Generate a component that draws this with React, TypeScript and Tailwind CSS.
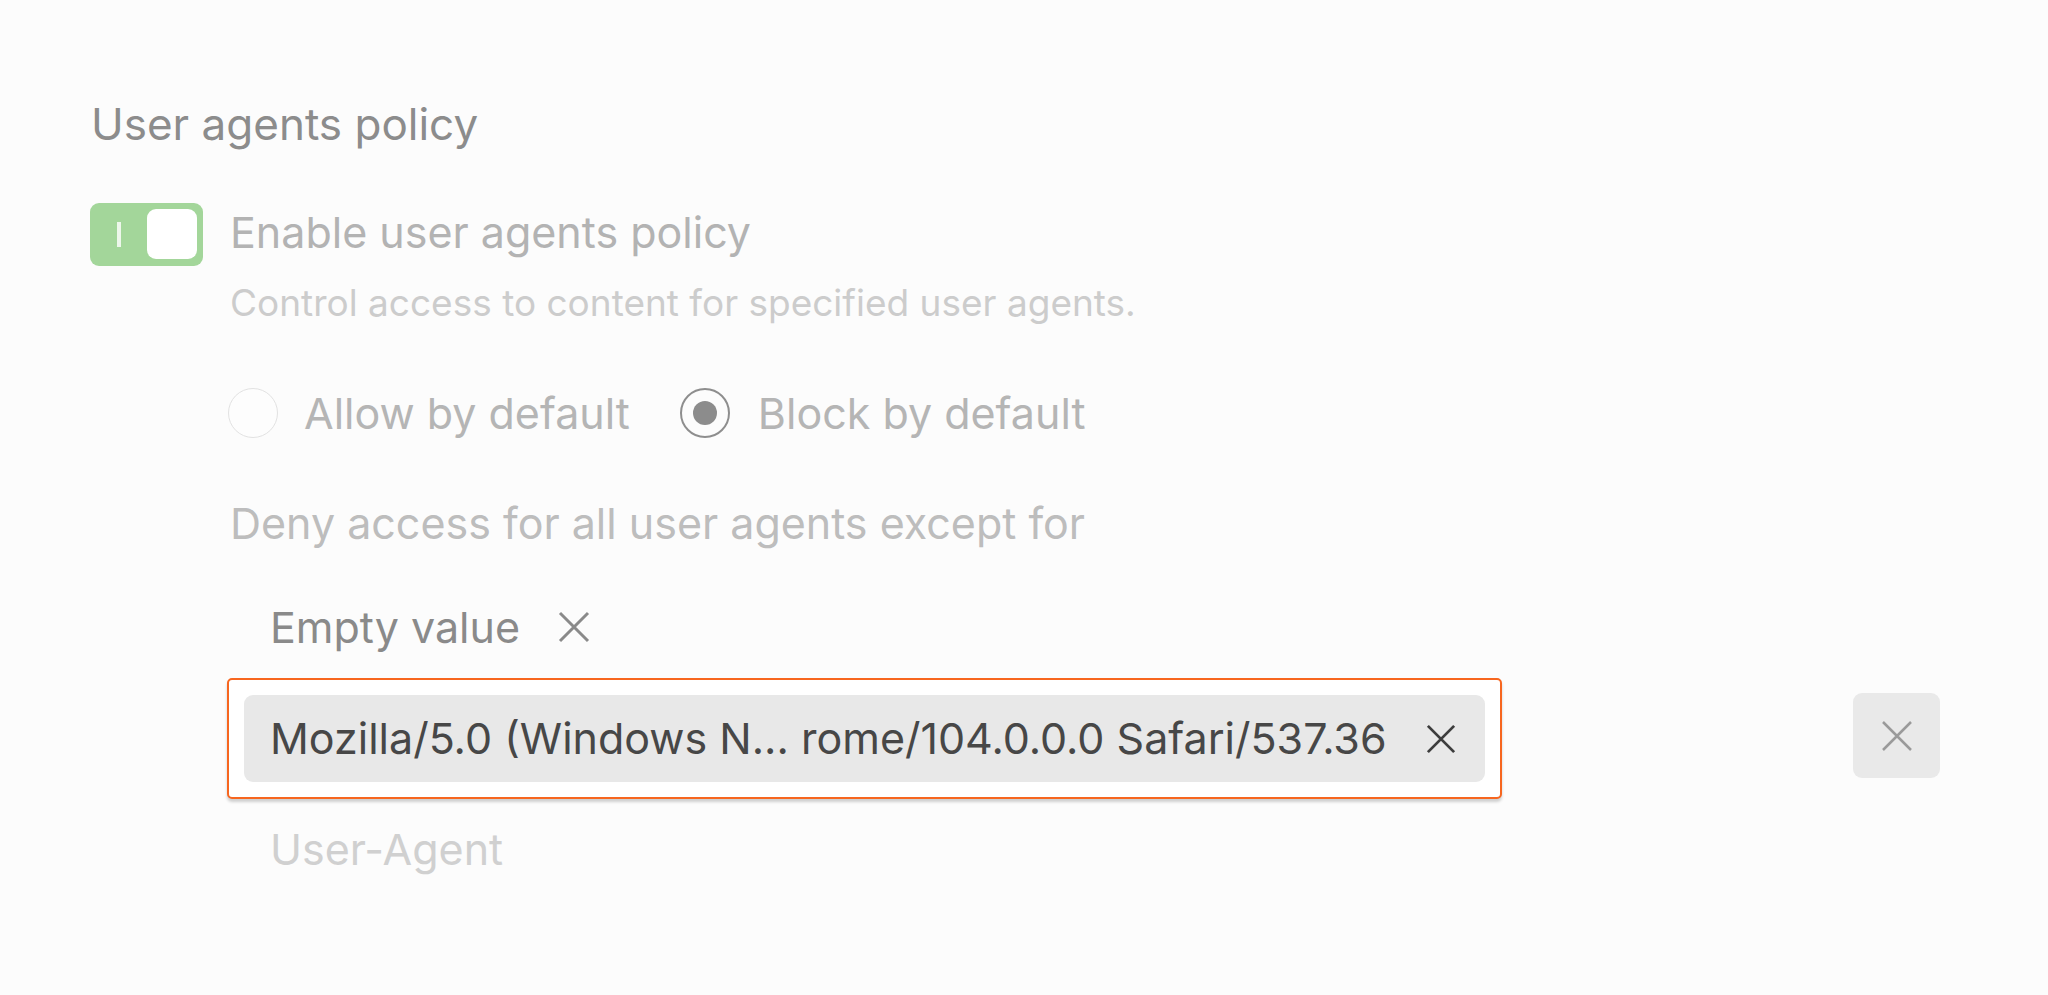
import React from "react";

function XIcon({ size, color, stroke }: { size: number; color: string; stroke: number }) {
  return (
    <svg width={size} height={size} viewBox="0 0 32 32" fill="none">
      <path d="M2 2 L30 30 M30 2 L2 30" stroke={color} strokeWidth={stroke} strokeLinecap="butt" />
    </svg>
  );
}

export default function App() {
  return (
    <div className="min-h-screen bg-[#fcfcfc] font-['Inter','Noto_Sans',sans-serif] pl-[90px] pt-[97px]">
      <h2 className="h-[54px] flex items-center pl-px text-[44px] font-normal text-[#8c8c8c]">
        User agents policy
      </h2>

      <div className="mt-[52px] flex items-start">
        <div className="relative w-[113px] h-[63px] rounded-[9px] bg-[#a3d69a] shrink-0">
          <div className="absolute left-[27px] top-[19px] w-[4px] h-[25px] bg-white/80" />
          <div className="absolute right-[6px] top-[6px] w-[50px] h-[50px] rounded-[9px] bg-white" />
        </div>

        <div className="ml-[27px] flex flex-col">
          <div className="h-[58px] leading-[58px] text-[43px] text-[#b3b3b3]">Enable user agents policy</div>
          <div className="mt-[17px] h-[50px] leading-[50px] text-[37px] text-[#cccccc]">
            Control access to content for specified user agents.
          </div>

          <div className="mt-[60px] h-[50px] flex items-center -ml-[2px]">
            <div className="w-[50px] h-[50px] rounded-full border-[1.5px] border-[#e2e2e2] bg-[#fdfdfd]" />
            <span className="ml-[26px] text-[43px] text-[#b5b5b5]">Allow by default</span>
            <div className="ml-[50px] w-[50px] h-[50px] rounded-full border-[2.5px] border-[#8e8e8e] flex items-center justify-center">
              <div className="w-[24px] h-[24px] rounded-full bg-[#8c8c8c]" />
            </div>
            <span className="ml-[28px] text-[43px] text-[#b5b5b5]">Block by default</span>
          </div>

          <div className="mt-[60px] h-[50px] leading-[50px] text-[43px] text-[#bdbdbd]">
            Deny access for all user agents except for
          </div>

          <div className="mt-[54px] h-[50px] flex items-center pl-[40px]">
            <span className="text-[43px] text-[#8a8a8a]">Empty value</span>
            <span className="ml-[38px] flex items-center">
              <XIcon size={32} color="#8a8a8a" stroke={3} />
            </span>
          </div>

          <div className="mt-[26px] flex items-center">
            <div className="-ml-[3px] w-[1275px] h-[121px] rounded-[5px] border-2 border-[#f7661f] bg-white shadow-[0_3px_3px_rgba(0,0,0,0.18)] p-[15px]">
              <div className="h-[87px] rounded-[9px] bg-[#e8e8e8] flex items-center pl-[26px] pr-[29px]">
                <span className="flex-1 text-[43px] text-[#474747] whitespace-nowrap">
                  Mozilla/5.0 (Windows N... rome/104.0.0.0 Safari/537.36
                </span>
                <XIcon size={30} color="#3d3d3d" stroke={3} />
              </div>
            </div>
            <button className="ml-[351px] w-[87px] h-[85px] rounded-[9px] bg-[#e9e9e9] flex items-center justify-center -mt-[6px]">
              <XIcon size={32} color="#9a9a9a" stroke={2.5} />
            </button>
          </div>

          <div className="mt-[25px] h-[50px] leading-[50px] pl-[40px] text-[43px] text-[#d0d0d0]">User-Agent</div>
        </div>
      </div>
    </div>
  );
}
